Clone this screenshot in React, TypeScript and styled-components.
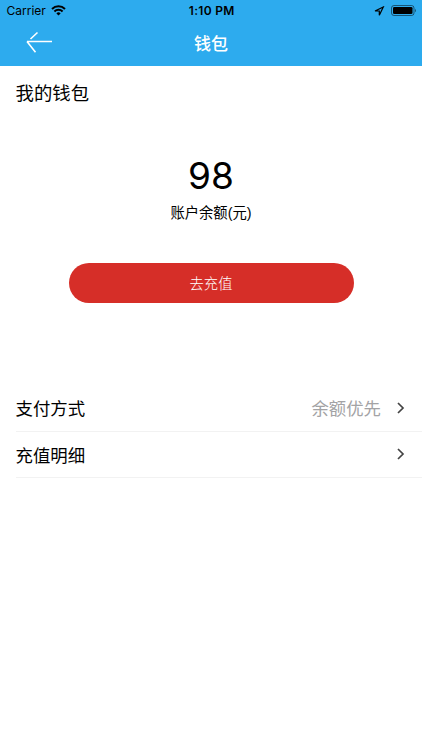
import React from "react";
import styled, { createGlobalStyle } from "styled-components";

const GlobalStyle = createGlobalStyle`
  * { box-sizing: border-box; }
  body { margin: 0; background: #fff; color: #000; font-family: Inter, "Noto Sans CJK SC", sans-serif; }
`;
const Screen = styled.main`
  height: 750px;
  display: flex;
  flex-direction: column;
  background: #fff;
`;
const Header = styled.header`
  height: 65.5px;
  background: #2dabee;
`;
const StatusBar = styled.div`
  height: 21px;
  padding: 0 5px 0 6.5px;
  display: grid;
  grid-template-columns: 1fr auto 1fr;
  align-items: center;
  font-size: 12px;
`;
const StatusGroup = styled.div<{ $end?: boolean }>`
  display: flex;
  align-items: center;
  gap: 5px;
  justify-content: ${(p) => (p.$end ? "flex-end" : "flex-start")};
`;
const Clock = styled.time`
  font-weight: 600;
  letter-spacing: 0.3px;
`;
const NavBar = styled.nav`
  height: 43px;
  padding: 0 26px;
  display: grid;
  grid-template-columns: 26px 1fr 26px;
  align-items: center;
`;
const BackButton = styled.button`
  border: 0;
  padding: 0 0 2px;
  background: none;
  display: flex;
`;
const NavTitle = styled.h1`
  margin: 0;
  text-align: center;
  font-size: 17px;
  font-weight: 500;
  color: #fff;
`;
const SectionTitle = styled.h2`
  margin: 0;
  padding: 0 15.5px;
  height: 54px;
  line-height: 54px;
  font-size: 18.4px;
  font-weight: 400;
`;
const Balance = styled.section`
  display: flex;
  flex-direction: column;
  align-items: center;
  height: 265.5px;
  padding-top: 32px;
`;
const Amount = styled.div`
  font-size: 37px;
  line-height: 48px;
`;
const Caption = styled.div`
  margin-top: 3px;
  font-family: "Liberation Sans", "Noto Sans CJK SC", sans-serif;
  font-size: 14.3px;
  line-height: 20px;
`;
const TopUpButton = styled.button`
  margin-top: 40px;
  width: 285px;
  height: 40.5px;
  border: 0;
  border-radius: 21px;
  padding: 0;
  background: #d62e28;
  color: #fff;
  font: inherit;
  font-size: 14.3px;
  font-weight: 300;
`;
const List = styled.ul`
  margin: 0;
  padding: 0 0 0 15.5px;
  list-style: none;
`;
const Row = styled.li`
  height: 46.5px;
  padding-right: 16px;
  display: flex;
  align-items: center;
  border-bottom: 1px solid #f2f2f2;
  font-size: 17.4px;
`;
const RowValue = styled.span`
  margin-left: auto;
  margin-right: 15px;
  color: #a3a3a5;
`;

const Chevron = () => (
  <svg width="10" height="12" viewBox="0 0 10 12" fill="none" stroke="#444" strokeWidth="1.7">
    <path d="M2 1l5 5-5 5" />
  </svg>
);

export default function App() {
  return (
    <Screen>
      <GlobalStyle />
      <Header>
        <StatusBar>
          <StatusGroup>
            Carrier
            <svg width="15" height="11" viewBox="0 0 15 11" fill="none" stroke="#000" strokeWidth="2">
              <path d="M1 4a9.3 9.3 0 0 1 13 0M3.4 6.5a5.8 5.8 0 0 1 8.2 0" />
              <path d="M5.4 8.4a3 3 0 0 1 4.2 0L7.5 10.6z" fill="#000" stroke="none" />
            </svg>
          </StatusGroup>
          <Clock>1:10 PM</Clock>
          <StatusGroup $end>
            <svg width="12" height="10" viewBox="0 0 12 10" fill="none" stroke="#000" strokeWidth="1.2">
              <path d="M1 5L9.3 1 5.3 9.3V5z" />
            </svg>
            <svg width="26" height="11" viewBox="0 0 26 11">
              <rect x=".5" y=".5" width="22.5" height="10" rx="2.5" fill="none" stroke="#000" opacity=".5" />
              <rect x="2" y="2" width="19.5" height="7" rx="1.3" />
              <path d="M24 3.7q2 1.8 0 3.6z" opacity=".5" />
            </svg>
          </StatusGroup>
        </StatusBar>
        <NavBar>
          <BackButton aria-label="返回">
            <svg width="26" height="22" viewBox="0 0 26 22" fill="none" stroke="#fff" strokeWidth="1.6">
              <path d="M11.5 1.5L4.5 8M26 10.5H1M1 10.5L9.5 21.2" />
            </svg>
          </BackButton>
          <NavTitle>钱包</NavTitle>
        </NavBar>
      </Header>
      <SectionTitle>我的钱包</SectionTitle>
      <Balance>
        <Amount>98</Amount>
        <Caption>账户余额(元)</Caption>
        <TopUpButton>去充值</TopUpButton>
      </Balance>
      <List>
        <Row>
          支付方式<RowValue>余额优先</RowValue>
          <Chevron />
        </Row>
        <Row>
          充值明细<RowValue />
          <Chevron />
        </Row>
      </List>
    </Screen>
  );
}
